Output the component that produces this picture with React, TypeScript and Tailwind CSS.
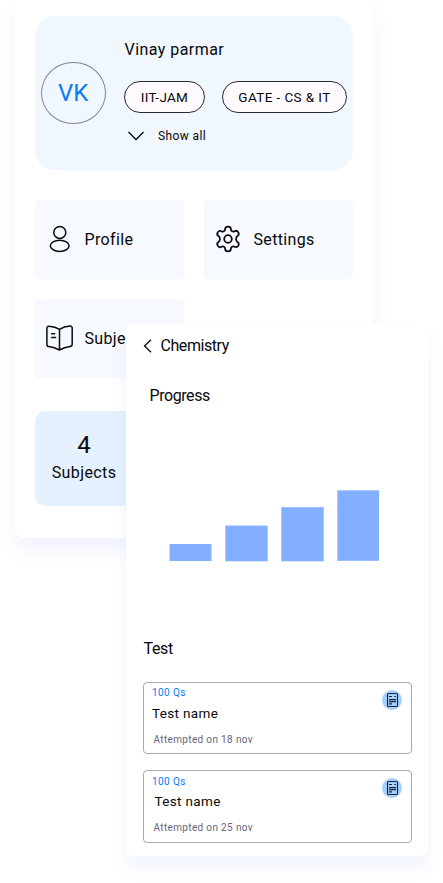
import type { ReactNode } from "react";

function PersonIcon() {
  return (
    <svg width="30" height="30" viewBox="0 0 30 30" fill="none" stroke="#0b0b0f" strokeWidth="1.5">
      <circle cx="14.8" cy="8.4" r="6" />
      <ellipse cx="14.7" cy="21.8" rx="9.4" ry="5.6" />
    </svg>
  );
}

function GearIcon() {
  return (
    <svg width="30" height="30" viewBox="0 0 30 30" fill="none" stroke="#0b0b0f" strokeWidth="1.8" strokeLinejoin="round">
      <g transform="translate(-1 -0.2)">
        <circle cx="15" cy="15.2" r="3.8" />
        <path d="M12.2 5.2C12.2 3.7 13.4 2.9 15 2.9s2.8.8 2.800 2.300c0 2 2.100 3.200 3.900 2.200 1.400-.8 2.800-.2 3.600 1.200.8 1.400.6 2.800-.8 3.600-1.900 1.100-1.900 4.900 0 6 1.400.8 1.600 2.200.8 3.600-.8 1.400-2.200 2-3.600 1.200-1.800-1-3.900.2-3.900 2.200 0 1.500-1.200 2.300-2.800 2.300s-2.800-.8-2.800-2.300c0-2-2.100-3.200-3.900-2.200-1.400.8-2.800.2-3.600-1.200-.8-1.400-.6-2.800.8-3.600 1.900-1.100 1.900-4.900 0-6-1.400-.8-1.600-2.200-.8-3.600.8-1.400 2.200-2 3.600-1.200 1.800 1 3.900-.2 3.900-2.200Z" />
      </g>
    </svg>
  );
}

function BookIcon() {
  return (
    <svg width="30" height="30" viewBox="0 0 30 30" fill="none" stroke="#0b0b0f" strokeWidth="1.5" strokeLinecap="round" strokeLinejoin="round">
      <path d="M14.5 6.4C11.8 4.6 7.9 3.5 4.2 3.2c-1.4-.1-2.3.8-2.3 2.2v16c0 1.3.8 2.1 2 2.2 3.7.5 7.4 1.7 10.6 3.4 3.2-1.700 6.800-2.900 10.500-3.400 1.300-.2 2.200-1 2.200-2.300V5.100c0-1.400-1-2.200-2.400-2.100-3.700.3-7.300 1.500-10.300 3.400ZM14.500 6.400V27M6.600 10.700h3M6.600 14.600h4" />
    </svg>
  );
}

function PaperIcon() {
  return (
    <svg width="20" height="20" viewBox="0 0 20 20" fill="none" stroke="#172033" strokeWidth="1.1">
      <rect x="5.500" y="3.500" width="10" height="13" rx="1" />
      <path d="M7 6.500h3M12.300 6.500h1.500M7 9.600h7M7 11.600h7M7 13.900h3" />
    </svg>
  );
}

function Tile({ icon, label }: { icon: ReactNode; label: string }) {
  return (
    <div className="flex h-[79px] items-center rounded-[4px] bg-[#f6f9ff] pl-[10px] text-base tracking-[0.35px]">
      {icon}
      <span className="ml-[9.500px] pt-px">{label}</span>
    </div>
  );
}

function TestCard({ date, countClass, nameClass }: { date: string; countClass: string; nameClass: string }) {
  return (
    <div className="flex h-[72.500px] w-[268.500px] justify-between rounded-[4px] border border-[#a9a8b0] pt-[3px] pr-[9px] pl-[8px]">
      <div>
        <div className={`h-[14px] text-[10px] leading-[14px] tracking-[0.42px] text-[#087cf5] ${countClass}`}>100 Qs</div>
        <div className={`mt-px h-6 text-[13.500px] leading-6 tracking-[0.350px] ${nameClass}`}>Test name</div>
        <div className="mt-[8px] ml-[1.500px] h-[14px] text-[10px] leading-[14px] tracking-[0.350px] text-[#66647a]">{date}</div>
      </div>
      <div className="mt-[4px] h-5 w-5 rounded-full bg-[#a7d0ff]">
        <PaperIcon />
      </div>
    </div>
  );
}

const bars = [
  { x: 0.5, y: 54, width: 42, height: 17 },
  { x: 56.3, y: 35.6, width: 42.4, height: 35.7 },
  { x: 112.3, y: 17.2, width: 42.4, height: 54.1 },
  { x: 168.3, y: 0.3, width: 41.7, height: 70.5 },
];

export default function App() {
  return (
    <div className="relative h-[883px] w-[443px] overflow-hidden bg-white font-['Roboto',sans-serif] text-[#08080a]">
      <main className="ml-[15px] h-[538px] w-[358px] rounded-b-[8px] bg-white px-5 pt-4 shadow-[0_12px_18px_rgba(65,105,255,0.075)]">
        <section className="flex h-[154px] w-[318px] rounded-[20px] bg-[#f0f7ff] pl-[6px]">
          <div className="mt-[46px] flex h-[62px] w-[64.500px] items-center justify-center rounded-[50%] border border-[#85828b] text-2xl text-[#087cf5]">
            VK
          </div>
          <div className="ml-[18.500px] pt-[22px]">
            <h1 className="ml-[0.500px] h-6 text-base leading-6 tracking-[0.450px]">Vinay parmar</h1>
            <div className="mt-[19px] flex gap-[17px]">
              <span className="flex h-8 w-[81px] items-center justify-center rounded-full border border-[#2c2930] bg-[#fffafe] pt-px text-[13.500px] tracking-[0.300px]">IIT-JAM</span>
              <span className="flex h-8 w-[125px] items-center justify-center rounded-full border border-[#2c2930] bg-[#fffafe] pt-px text-[13.500px] tracking-[0.400px] whitespace-nowrap">GATE - CS &amp; IT</span>
            </div>
            <button className="mt-[14px] ml-[4px] flex h-[18px] items-center text-xs tracking-[0.400px]">
              <svg width="16" height="10" viewBox="0 0 16 10" fill="none" stroke="#08080a" strokeWidth="1.300"><path d="M.5 1 8 8.500 15.500 1" /></svg>
              <span className="ml-[14px]">Show all</span>
            </button>
          </div>
        </section>
        <section className="mt-[29.500px] grid w-[318px] grid-cols-[149px_149px] gap-5">
          <Tile icon={<PersonIcon />} label="Profile" />
          <Tile icon={<GearIcon />} label="Settings" />
          <Tile icon={<BookIcon />} label="Subjects" />
        </section>
        <section className="mt-[33px] h-[95px] w-[98px] rounded-l-[10px] bg-[#e5f1ff] pt-[18px] text-center">
          <div className="h-8 text-2xl leading-8">4</div>
          <div className="h-6 text-base leading-[23px] tracking-[0.400px]">Subjects</div>
        </section>
      </main>
      <article className="absolute top-[324px] left-[126px] h-[532px] w-[302px] rounded-[8px] bg-white pl-[17px] shadow-[0_12px_18px_rgba(65,105,255,0.075)]">
        <header className="flex h-11 items-center text-base">
          <svg width="9" height="14" viewBox="0 0 9 14" fill="none" stroke="#08080a" strokeWidth="1.300"><path d="M8 .8 1.500 7 8 13.200" /></svg>
          <h2 className="ml-[8.500px] text-base tracking-[-0.430px]">Chemistry</h2>
        </header>
        <h3 className="mt-[16px] ml-[6.500px] h-6 text-base leading-6 tracking-[-0.430px]">Progress</h3>
        <svg className="mt-[82px] ml-[26px]" width="212" height="72" viewBox="0 0 212 72" fill="#82b0ff">
          {bars.map((bar) => (
            <rect key={bar.x} {...bar} />
          ))}
        </svg>
        <h3 className="mt-[75px] ml-[0.500px] h-6 text-base leading-6 tracking-[-0.350px]">Test</h3>
        <div className="mt-[20.500px] flex flex-col gap-4">
          <TestCard date="Attempted on 18 nov" countClass="" nameClass="" />
          <TestCard date="Attempted on 25 nov" countClass="pt-px" nameClass="ml-[2.500px]" />
        </div>
      </article>
    </div>
  );
}
